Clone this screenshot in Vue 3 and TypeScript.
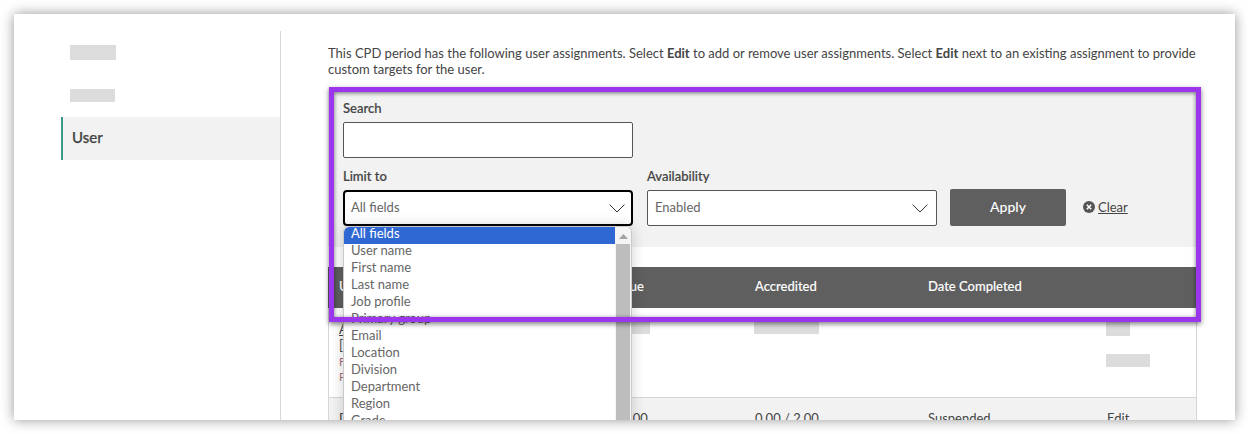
<script setup lang="ts">
const options: string[] = ['All fields', 'User name', 'First name', 'Last name', 'Job profile', 'Primary group', 'Email', 'Location', 'Division', 'Department', 'Region', 'Grade']
</script>

<template>
  <div class="stage">
    <div class="card">
      <aside class="sidebar">
        <div class="nav-item"><span class="redact r1"></span></div>
        <div class="nav-item"><span class="redact r2"></span></div>
        <div class="nav-item active">User</div>
      </aside>
      <main class="main">
        <p class="intro">This CPD period has the following user assignments. Select <b>Edit</b> to add or remove user assignments. Select <b>Edit</b> next to an existing assignment to provide custom targets for the user.</p>
        <section class="panel">
          <label class="label">Search</label>
          <div class="input"></div>
          <div class="filters">
            <div class="field">
              <label class="label">Limit to</label>
              <div class="select focus">
                <span>All fields</span>
                <svg class="chev" width="16" height="9" viewBox="0 0 16 9"><path d="M.5.500l7.500 7.500 7.500-7.500" fill="none" stroke="#333" stroke-width="1" /></svg>
              </div>
              <div class="dropdown">
                <ul class="list">
                  <li v-for="(o, i) in options" :key="o" :class="{ sel: i === 0 }">{{ o }}</li>
                </ul>
                <div class="scroll">
                  <svg class="up" width="9" height="5" viewBox="0 0 9 5"><path d="M4.500 0L9 5H0z" fill="#a3a3a3" /></svg>
                  <div class="thumb"></div>
                </div>
              </div>
            </div>
            <div class="field">
              <label class="label">Availability</label>
              <div class="select">
                <span>Enabled</span>
                <svg class="chev" width="16" height="9" viewBox="0 0 16 9"><path d="M.5.500l7.500 7.500 7.500-7.500" fill="none" stroke="#333" stroke-width="1" /></svg>
              </div>
            </div>
            <button class="apply">Apply</button>
            <div class="clear">
              <svg width="12" height="12" viewBox="0 0 12 12"><circle cx="6" cy="6" r="6" fill="#555" /><path d="M3.800 3.800l4.400 4.400M8.200 3.800l-4.400 4.400" stroke="#fff" stroke-width="1.500" /></svg>
              <a>Clear</a>
            </div>
          </div>
        </section>
        <section class="table">
          <div class="row head">
            <span>U</span><span class="val">Value</span><span>Accredited</span><span>Date Completed</span><span></span>
          </div>
          <div class="row first">
            <div class="user">
              <a>A</a>
              <div class="bracket">[</div>
              <div class="tiny">F</div>
              <div class="tiny">P</div>
            </div>
            <div class="val"><span class="redact r3"></span></div>
            <div><span class="redact r4"></span></div>
            <div></div>
            <div class="actions"><span class="redact r5"></span><span class="redact r6"></span></div>
          </div>
          <div class="row alt">
            <span>D</span><span class="val">0.00 / 2.00</span><span>0.00 / 2.00</span><span>Suspended</span><span>Edit</span>
          </div>
        </section>
      </main>
    </div>
    <div class="frame"></div>
  </div>
</template>

<style>
html, body { margin: 0; background: #fff; }
</style>

<style scoped>
.stage {
  position: relative;
  width: 1248px;
  height: 434px;
  box-sizing: border-box;
  padding: 14px 13px 14px 14px;
  overflow: hidden;
  font-family: Lato, "Liberation Sans", sans-serif;
  font-size: 13px;
  line-height: 16px;
  color: #444;
}
.card {
  display: flex;
  height: 100%;
  box-sizing: border-box;
  padding-top: 17px;
  background: #fff;
  overflow: hidden;
  box-shadow: 0 0 12px rgba(0, 0, 0, 0.42);
}
.sidebar {
  width: 267px;
  box-sizing: border-box;
  padding-left: 47px;
  border-right: 1px solid #d6d6d6;
  flex: none;
}
.nav-item {
  height: 43px;
  box-sizing: border-box;
  display: flex;
  align-items: center;
  padding-left: 9px;
}
.nav-item.active {
  padding-bottom: 4px;
  border-left: 2px solid #3d9a8b;
  background: #f2f2f2;
  font-size: 15px;
  font-weight: 500;
  -webkit-text-stroke: 0.25px #444;
  color: #444;
}
.redact { display: block; background: #dcdcdc; }
.r1 { width: 46px; height: 15px; }
.r2 { width: 45px; height: 13px; }
.r3 { width: 22px; height: 13px; margin-left: 44px; }
.r4 { width: 65px; height: 13px; margin-left: -1px; }
.r5 { width: 24px; height: 15px; margin-left: -1px; }
.r6 { width: 44px; height: 13px; margin: 18px 0 0 -1px; }
.main {
  width: 869px;
  box-sizing: content-box;
  padding: 14px 0 0 47px;
  flex: none;
}
.intro { margin: 0 0 11px; }
.intro b { font-weight: 700; }
.panel {
  height: 159px;
  box-sizing: border-box;
  padding: 12px 15px 0;
  background: #f2f2f2;
}
.label {
  display: block;
  height: 16px;
  margin-bottom: 6px;
  font-weight: 500;
  -webkit-text-stroke: 0.2px #444;
}
.input {
  width: 290px;
  height: 36px;
  box-sizing: border-box;
  background: #fff;
  border: 1px solid #555;
  border-radius: 2px;
}
.filters {
  display: flex;
  align-items: flex-end;
  margin-top: 10px;
}
.field { position: relative; width: 290px; margin-right: 14px; }
.field + .field { margin-right: 13px; }
.select {
  height: 36px;
  box-sizing: border-box;
  display: flex;
  align-items: center;
  justify-content: space-between;
  padding: 0 8px 0 7px;
  background: #fff;
  border: 1px solid #555;
  border-radius: 2px;
  color: #666;
}
.select span { padding-bottom: 2px; }
.select.focus { border: 2px solid #000; border-radius: 4px; padding: 0 6px 0 6px; }
.chev { flex: none; }
.apply {
  width: 116px;
  height: 37px;
  border: 0;
  border-radius: 2px;
  background: #5f5f5f;
  color: #fff;
  font: 500 14px/16px Lato, sans-serif;
  padding: 0 0 2px;
}
.clear {
  display: flex;
  align-items: center;
  gap: 3px;
  height: 37px;
  margin-left: 17px;
  padding-bottom: 2px;
  box-sizing: border-box;
}
.clear a { text-decoration: underline; color: #444; }
.dropdown {
  position: absolute;
  top: 100%;
  left: 0;
  z-index: 2;
  width: 289px;
  height: 210px;
  box-sizing: border-box;
  display: flex;
  background: #fff;
  border: 1px solid #c9c9c9;
  border-bottom: 0;
  border-radius: 6px 6px 0 0;
  overflow: hidden;
  box-shadow: 0 0 14px rgba(0, 0, 0, 0.18);
}
.list {
  list-style: none;
  margin: 0;
  padding: 0;
  flex: 1;
  color: #666;
}
.list li { height: 17px; line-height: 13px; padding-left: 7px; }
.list li.sel { background: #2f68d3; color: #fff; border-radius: 5px 0 0 0; }
.scroll {
  width: 16px;
  flex: none;
  display: flex;
  flex-direction: column;
  align-items: center;
  background: #f4f4f4;
}
.up { margin: 7px 0 5px; }
.thumb { width: 14px; flex: 1; background: #bdbdbd; }
.table {
  margin-top: 20px;
  border-left: 1px solid #d6d6d6;
  border-right: 1px solid #d6d6d6;
}
.row {
  display: grid;
  grid-template-columns: 245px 171px 173px 179px 1fr;
  padding-left: 10px;
}
.head {
  height: 41px;
  align-items: center;
  margin: 0 -1px;
  padding-left: 11px;
  padding-bottom: 3px;
  box-sizing: border-box;
  background: #5f5f5f;
  color: #fff;
  font-weight: 500;
  -webkit-text-stroke: 0.1px #fff;
}
.val { text-align: right; width: 60px; white-space: nowrap; }
.first {
  height: 90px;
  box-sizing: border-box;
  padding-top: 13px;
  border-bottom: 1px solid #d6d6d6;
}
.user a { text-decoration: underline; display: block; }
.bracket { margin-bottom: 1px; }
.tiny { font-size: 11px; line-height: 15px; color: #a5707e; }
.alt {
  height: 40px;
  padding-top: 12px;
  background: #f2f2f2;
}
.frame {
  position: absolute;
  left: 329px;
  top: 87px;
  width: 872px;
  height: 235px;
  box-sizing: border-box;
  border: 5px solid #9b36ee;
  z-index: 3;
  pointer-events: none;
  box-shadow: 0 2px 5px rgba(0, 0, 0, 0.5), inset 0 1px 4px rgba(0, 0, 0, 0.55);
}
</style>
